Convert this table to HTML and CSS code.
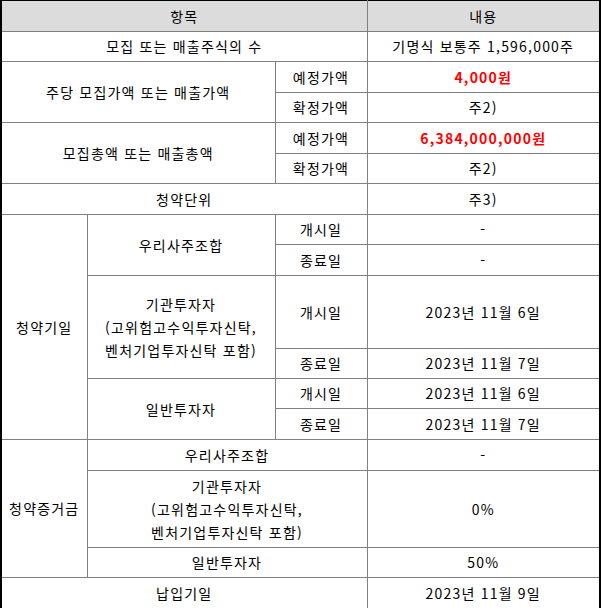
FILE: index.html
```html
<!DOCTYPE html>
<html lang="ko">
<head>
<meta charset="utf-8">
<link rel="stylesheet" href="styles.css">
</head>
<body>
<table class="t">
  <colgroup>
    <col class="c1"><col class="c2"><col class="c3"><col class="c4">
  </colgroup>
  <tr class="h31 head">
    <td colspan="3">항목</td>
    <td>내용</td>
  </tr>
  <tr class="h30">
    <td colspan="3">모집 또는 매출주식의 수</td>
    <td>기명식 보통주 1,596,000주</td>
  </tr>
  <tr class="h31">
    <td colspan="2" rowspan="2">주당 모집가액 또는 매출가액</td>
    <td>예정가액</td>
    <td class="red">4,000원</td>
  </tr>
  <tr class="h30">
    <td>확정가액</td>
    <td>주2)</td>
  </tr>
  <tr class="h31">
    <td colspan="2" rowspan="2">모집총액 또는 매출총액</td>
    <td>예정가액</td>
    <td class="red">6,384,000,000원</td>
  </tr>
  <tr class="h30">
    <td>확정가액</td>
    <td>주2)</td>
  </tr>
  <tr class="h31">
    <td colspan="3">청약단위</td>
    <td>주3)</td>
  </tr>
  <tr class="h30">
    <td rowspan="6">청약기일</td>
    <td rowspan="2">우리사주조합</td>
    <td>개시일</td>
    <td>-</td>
  </tr>
  <tr class="h31">
    <td>종료일</td>
    <td>-</td>
  </tr>
  <tr class="h73">
    <td rowspan="2">기관투자자<br>(고위험고수익투자신탁,<br>벤처기업투자신탁 포함)</td>
    <td>개시일</td>
    <td>2023년 11월 6일</td>
  </tr>
  <tr class="h30">
    <td>종료일</td>
    <td>2023년 11월 7일</td>
  </tr>
  <tr class="h30">
    <td rowspan="2">일반투자자</td>
    <td>개시일</td>
    <td>2023년 11월 6일</td>
  </tr>
  <tr class="h31">
    <td>종료일</td>
    <td>2023년 11월 7일</td>
  </tr>
  <tr class="h31">
    <td rowspan="3">청약증거금</td>
    <td colspan="2">우리사주조합</td>
    <td>-</td>
  </tr>
  <tr class="h77">
    <td colspan="2">기관투자자<br>(고위험고수익투자신탁,<br>벤처기업투자신탁 포함)</td>
    <td>0%</td>
  </tr>
  <tr class="h30">
    <td colspan="2">일반투자자</td>
    <td>50%</td>
  </tr>
  <tr class="h31 last">
    <td colspan="3">납입기일</td>
    <td>2023년 11월 9일</td>
  </tr>
</table>
</body>
</html>
```

FILE: styles.css
```css
html, body {
  margin: 0;
  padding: 0;
  background: #fff;
}
.t {
  border-collapse: collapse;
  table-layout: fixed;
  width: 601px;
  border-top: 1px solid #000;
  border-left: 2px solid #000;
  border-right: 2px solid #000;
  font-family: "Noto Sans CJK KR", "Noto Sans", sans-serif;
  font-size: 14px;
  color: #000;
}
.c1 { width: 86px; }
.c2 { width: 188px; }
.c3 { width: 92px; }
.c4 { width: 233px; }
.t td {
  border: 1px solid #808080;
  text-align: center;
  vertical-align: middle;
  padding: 0;
  line-height: 23px;
  letter-spacing: 1.2px;
}
.head td {
  background: #dcdcdc;
  border-top: 1px solid #000;
}
.red { color: #ff0000; font-weight: bold; }
.h30 { height: 30px; }
.h31 { height: 31px; }
.h73 { height: 73px; }
.h77 { height: 77px; }
.last td { border-bottom: none; }
```
